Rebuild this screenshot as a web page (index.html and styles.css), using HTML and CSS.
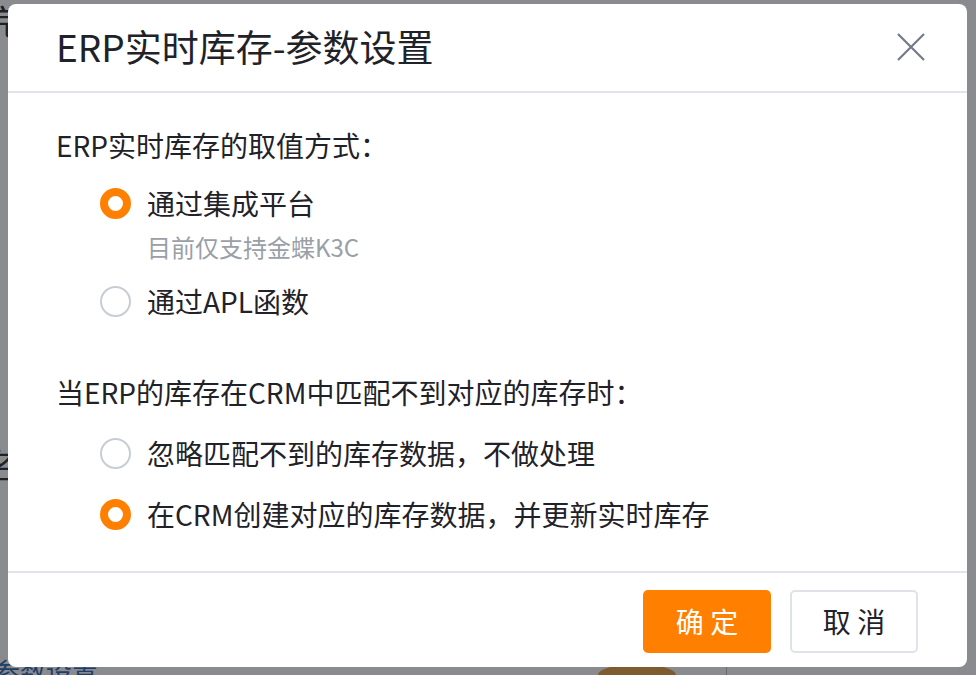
FILE: index.html
```html
<!DOCTYPE html>
<html lang="zh-CN">
<head>
<meta charset="utf-8">
<title>ERP实时库存-参数设置</title>
<link rel="stylesheet" href="styles.css">
</head>
<body>
<div class="page">
  <div class="bg-left">
    <div class="bg-t1">完</div>
    <div class="bg-t2">名</div>
  </div>
  <div class="bg-link">参数设置</div>
  <div class="bg-avatar"></div>
  <div class="bg-line"></div>
  <div class="mask"></div>
</div>
<div class="dialog">
  <div class="dialog-header">
    <div class="dialog-title">ERP实时库存-参数设置</div>
    <svg class="close" width="30" height="30" viewBox="0 0 30 30"><path d="M2 2 L28 28 M28 2 L2 28" stroke="#737b8a" stroke-width="2.2" fill="none"/></svg>
  </div>
  <div class="dialog-body">
    <div class="section-title">ERP实时库存的取值方式：</div>
    <div class="options">
      <div class="option">
        <span class="radio checked"></span><span class="label">通过集成平台</span>
      </div>
      <div class="hint">目前仅支持金蝶K3C</div>
      <div class="option opt-gap">
        <span class="radio"></span><span class="label">通过APL函数</span>
      </div>
    </div>
    <div class="section-title section-2">当ERP的库存在CRM中匹配不到对应的库存时：</div>
    <div class="options options-2">
      <div class="option">
        <span class="radio"></span><span class="label">忽略匹配不到的库存数据，不做处理</span>
      </div>
      <div class="option">
        <span class="radio checked"></span><span class="label">在CRM创建对应的库存数据，并更新实时库存</span>
      </div>
    </div>
  </div>
  <div class="dialog-footer">
    <button class="btn btn-primary">确 定</button>
    <button class="btn btn-default">取 消</button>
  </div>
</div>
</body>
</html>
```
FILE: styles.css
```css
* { box-sizing: border-box; }
html, body { margin: 0; padding: 0; }
body {
  width: 976px;
  height: 675px;
  overflow: hidden;
  background: #ffffff;
  font-family: "Noto Sans CJK SC", "Noto Sans", sans-serif;
  position: relative;
}
.page { width: 976px; height: 675px; position: relative; overflow: hidden; }
.bg-left { position: absolute; left: 0; top: 0; width: 20px; height: 675px; }
.bg-t1 { position: absolute; left: -14px; top: -4px; font-size: 34px; color: #222; }
.bg-t2 { position: absolute; left: -16px; top: 440px; font-size: 34px; color: #222; }
.bg-link { position: absolute; left: -6px; top: 652px; font-size: 26px; color: #1f5fb0; }
.bg-avatar { position: absolute; left: 598px; top: 664px; width: 78px; height: 11px; border-radius: 39px 39px 0 0 / 11px 11px 0 0; background: #e99b3c; }
.bg-line { position: absolute; left: 726px; top: 560px; width: 1px; height: 115px; background: #bbb; }
.mask { position: absolute; inset: 0; background: rgba(30, 32, 38, 0.52); }

.dialog {
  position: absolute;
  left: 8px;
  top: 4px;
  width: 959px;
  height: 663px;
  background: #fff;
  border-radius: 8px;
  display: flex;
  flex-direction: column;
}
.dialog-header {
  height: 89px;
  flex: none;
  display: flex;
  align-items: center;
  justify-content: space-between;
  padding: 0 41px 0 48px;
  border-bottom: 2px solid #e1e4ea;
}
.dialog-title {
  font-size: 37px;
  color: #1f2329;
  line-height: 1;
  margin-top: -2px;
}
.close { display: block; margin-top: -2px; }

.dialog-body {
  flex: 1;
  padding: 32px 48px 0 48px;
  color: #1f2329;
}
.section-title {
  font-size: 28px;
  line-height: 40px;
  height: 40px;
}
.section-2 { margin-top: 51px; }
.options { padding-left: 44px; margin-top: 18px; }
.options-2 { display: flex; flex-direction: column; gap: 21px; margin-top: 21px; }
.option {
  display: flex;
  align-items: center;
  height: 40px;
}
.opt-gap { margin-top: 19px; }
.radio {
  width: 31px;
  height: 31px;
  border-radius: 50%;
  border: 2px solid #c7ccd5;
  background: #fff;
  flex: none;
  margin-right: 16px;
}
.radio.checked { border: 8.5px solid #ff8000; }
.label { font-size: 28px; line-height: 40px; }
.hint {
  padding-left: 47px;
  font-size: 24px;
  line-height: 30px;
  color: #9aa0a8;
  margin-top: 9px;
}

.dialog-footer {
  height: 96px;
  flex: none;
  border-top: 2px solid #e1e4ea;
  display: flex;
  align-items: center;
  justify-content: flex-end;
  gap: 19px;
  padding: 0 49px 0 0;
}
.btn {
  width: 128px;
  height: 63px;
  border-radius: 5px;
  font-family: "Noto Sans CJK SC", sans-serif;
  font-size: 28px;
  padding: 0;
  cursor: pointer;
  margin-top: 2px;
}
.btn-primary { background: #ff8000; color: #fff; border: none; }
.btn-default { background: #fff; color: #1f2329; border: 2px solid #dfe2e8; }
```
